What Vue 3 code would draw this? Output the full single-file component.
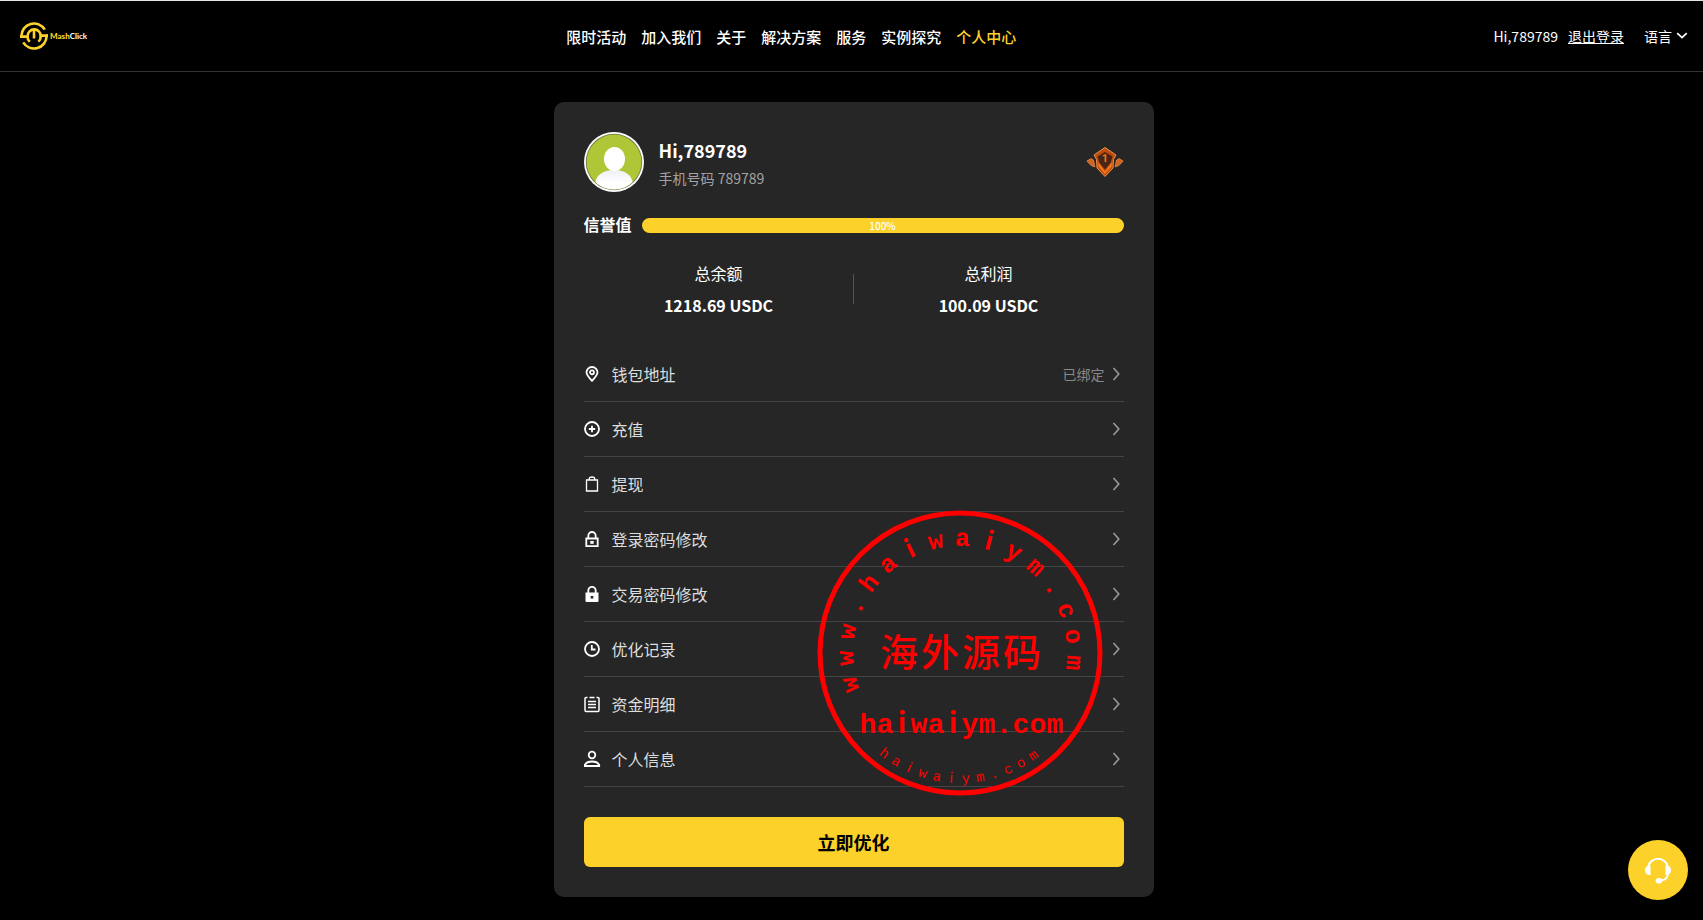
<script setup>
const navItems = ['限时活动', '加入我们', '关于', '解决方案', '服务', '实例探究', '个人中心']
const current = '个人中心'

const stats = [
  { label: '总余额', value: '1218.69 USDC' },
  { label: '总利润', value: '100.09 USDC' },
]

const menu = [
  { label: '钱包地址', icon: 'pin', note: '已绑定' },
  { label: '充值', icon: 'plus' },
  { label: '提现', icon: 'bag' },
  { label: '登录密码修改', icon: 'lock' },
  { label: '交易密码修改', icon: 'lockFill' },
  { label: '优化记录', icon: 'clock' },
  { label: '资金明细', icon: 'list' },
  { label: '个人信息', icon: 'user' },
]

const credit = 100

const upperArc = [...'www.haiwaiym.com'].map((char, i) => ({ char, angle: -106 + i * 13.4 }))
const lowerArc = [...'haiwaiym.com'].map((char, i) => ({ char, angle: 37 - i * 6.6 }))
const middleRow = [...'haiwaiym.com'].map((char, i) => ({ char, x: -92 + i * 17 }))
const titleRow = [...'海外源码'].map((char, i) => ({ char, x: -61 + i * 41 }))
</script>

<template>
  <div class="page">
    <header class="topbar">
      <a class="logo" href="#" aria-label="MashClick">
        <svg class="logo-mark" viewBox="0 0 28 28" aria-hidden="true">
          <g fill="none" stroke="#fbd12a" stroke-width="2.6">
            <path d="M1.4 15.500V14A12.600 12.600 0 0 1 24.800 7.600" />
            <path d="M26.600 12.500V14A12.600 12.600 0 0 1 3.200 20.400" />
            <path d="M0 14.600H7.600V14A6.600 6.600 0 0 1 20.800 14" />
            <path d="M28 13.600H20.600V14A6.600 6.600 0 0 1 18.400 19.600" />
            <path d="M7.400 14C7.400 16.500 8.200 18.400 9.800 19.800" />
            <path d="M14 7V16.500" />
          </g>
        </svg>
        <span class="logo-text"><b>Mash</b>Click</span>
      </a>
      <nav class="nav">
        <a v-for="item in navItems" :key="item" href="#" :class="{ active: item === current }">{{ item }}</a>
      </nav>
      <div class="account">
        <span>Hi,789789</span>
        <a class="logout" href="#">退出登录</a>
        <button class="lang" type="button">
          语言
          <svg viewBox="0 0 12 12" aria-hidden="true"><path d="M1.200 3.200 6 7.600l4.800-4.400" fill="none" stroke="#fff" stroke-width="1.700" /></svg>
        </button>
      </div>
    </header>

    <main class="content">
      <section class="card">
        <div class="profile">
          <svg class="avatar" viewBox="0 0 60 60" aria-hidden="true">
            <defs>
              <clipPath id="face"><circle cx="30" cy="30" r="27.500" /></clipPath>
              <linearGradient id="shirt" x1="0" y1="0" x2="0" y2="1"><stop stop-color="#edf0f7" /><stop offset=".6" stop-color="#fff" /></linearGradient>
            </defs>
            <circle cx="30" cy="30" r="30" fill="#fff" />
            <circle cx="30" cy="30" r="28.200" fill="#6d7548" />
            <circle cx="30" cy="30" r="27.400" fill="#afc736" />
            <g clip-path="url(#face)">
              <path d="M11 60V52C12 43 19 38 30 38S48 43 49 52V60Z" fill="url(#shirt)" />
              <ellipse cx="30.500" cy="27" rx="10.500" ry="12" fill="#fff" />
            </g>
          </svg>
          <div class="identity">
            <h1>Hi,789789</h1>
            <p>手机号码 789789</p>
          </div>
          <svg class="badge" viewBox="0 0 38 32" aria-label="1">
            <path d="M19 1.500 30 9 27.500 13.500 27 22 19 30.500 11 22 10.500 13.500 8 9Z" fill="#c04c0c" stroke="#e8914f" stroke-width="1" />
            <path d="M19 6 26.500 10.500 24.500 17 19 23.500 13.500 17 11.500 10.500Z" fill="#4a2414" />
            <path d="M12 16 19 25.500 26 16 25.500 20.500 19 28 12.500 20.500Z" fill="#f17a20" />
            <path d="M.8 15 5 12.500 7.500 14 9 21 5 19.500ZM37.200 15 33 12.500 30.500 14 29 21 33 19.500Z" fill="#d56420" stroke="#ef9955" stroke-width=".6" />
            <text x="19" y="16" text-anchor="middle">1</text>
          </svg>
        </div>

        <div class="credit">
          <span id="credit-label" class="credit-label">信誉值</span>
          <div class="track" role="progressbar" aria-labelledby="credit-label" :aria-valuenow="credit">
            <div class="fill" :style="{ width: credit + '%' }">{{ credit }}%</div>
          </div>
        </div>

        <dl class="stats">
          <div v-for="stat in stats" :key="stat.label">
            <dt>{{ stat.label }}</dt>
            <dd>{{ stat.value }}</dd>
          </div>
        </dl>

        <ul class="menu">
          <li v-for="item in menu" :key="item.label">
            <a href="#">
              <svg class="icon" viewBox="0 -1 18 18" aria-hidden="true">
                <g v-if="item.icon === 'pin'">
                  <path d="M8 14.800C4.800 11.500 2.500 9 2.500 6.300A5.500 5.300 0 0 1 13.500 6.300C13.500 9 11.200 11.500 8 14.800Z" />
                  <circle cx="8" cy="6.300" r="2" />
                </g>
                <g v-else-if="item.icon === 'plus'">
                  <circle cx="8" cy="8" r="7" />
                  <path d="M8 4.800V11.200M4.800 8H11.200" />
                </g>
                <g v-else-if="item.icon === 'bag'" class="thin">
                  <path d="M2.500 4H13.500V15H2.500ZM5.200 4V3Q5.200 1 8 1T10.800 3V4" />
                </g>
                <g v-else-if="item.icon === 'lock'">
                  <path d="M2.300 7.500H13.700V15.200H2.300ZM4.300 7.500V5A3.700 4 0 0 1 11.700 5V7.500" />
                  <rect class="solid" x="6.300" y="10" width="3.400" height="2.800" />
                </g>
                <g v-else-if="item.icon === 'lockFill'">
                  <path class="solid" fill-rule="evenodd" d="M1.500 6.500H14.500V15Q14.500 16 13.500 16H2.500Q1.500 16 1.500 15ZM6.700 10V12.500H9.300V10Z" />
                  <path d="M4.300 7V4.700A3.700 3.900 0 0 1 11.700 4.700V7" />
                </g>
                <g v-else-if="item.icon === 'clock'">
                  <circle cx="8" cy="8" r="7" />
                  <path d="M7.800 4V8.500H11.500" />
                </g>
                <g v-else-if="item.icon === 'list'" class="list">
                  <path d="M3.500 1.500H2Q1 1.500 1 2.500V14Q1 15.500 2 15.500H14Q15 15.500 15 14V2.500Q15 1.500 14 1.500H12.500M5.500 1.500H10.500M4 5.500H12M4 8.500H12M4 11.500H12" />
                </g>
                <g v-else>
                  <circle cx="8" cy="4" r="3.300" />
                  <path d="M.8 15V14Q2.500 10.500 8 10.500T15.200 14V15Z" />
                </g>
              </svg>
              <span class="label">{{ item.label }}</span>
              <span v-if="item.note" class="note">{{ item.note }}</span>
              <svg class="arrow" viewBox="0 0 16 16" aria-hidden="true"><path d="M5.500 2 10.800 8 5.500 14" /></svg>
            </a>
          </li>
        </ul>

        <button class="primary" type="button">立即优化</button>

        <svg class="stamp" viewBox="-143 -143 286 286" aria-hidden="true">
          <circle r="140" />
          <text v-for="(g, i) in upperArc" :key="'u' + i" class="arc" :class="{ plain: g.char === 'i' }" y="-107" :transform="`rotate(${g.angle})`">{{ g.char }}</text>
          <text v-for="(g, i) in titleRow" :key="'t' + i" class="title" :x="g.x" y="13">{{ g.char }}</text>
          <text v-for="(g, i) in middleRow" :key="'m' + i" class="domain" :class="{ plain: g.char === 'i' }" :x="g.x" y="80">{{ g.char }}</text>
          <text v-for="(g, i) in lowerArc" :key="'l' + i" class="small" :class="{ plain: g.char === 'i' }" y="130" :transform="`rotate(${g.angle})`">{{ g.char }}</text>
        </svg>
      </section>
    </main>

    <button class="support" type="button" aria-label="客服">
      <svg viewBox="0 0 30 30" aria-hidden="true">
        <path d="M5 13.500V12A10.200 10.200 0 0 1 25 12V13.500M25 18Q25 24.500 18 25.500" fill="none" stroke="#fff" stroke-width="2" />
        <path d="M7.500 10.500V20H6A4.800 4.800 0 0 1 5 10.800ZM22.500 10.500V20H24A4.800 4.800 0 0 0 25 10.800Z" fill="#fff" />
        <ellipse cx="16" cy="25.800" rx="3.400" ry="2.800" fill="#fff" />
      </svg>
    </button>
  </div>
</template>

<style>
body {
  margin: 0;
  background: #000;
}
</style>

<style scoped>
.page {
  box-sizing: border-box;
  min-height: 100vh;
  border-top: 1px solid #e1e5e5;
  background: #000;
  color: #fff;
  font-family: "Noto Sans CJK SC", sans-serif;
  font-size: 14px;
}
a {
  color: inherit;
  text-decoration: none;
}
button {
  border: 0;
  padding: 0;
  background: none;
  color: inherit;
  font: inherit;
  cursor: pointer;
}
.topbar {
  display: flex;
  align-items: center;
  justify-content: space-between;
  height: 70px;
  padding: 0 15px 0 20px;
  border-bottom: 1px solid #333;
}
.logo {
  display: flex;
  align-items: center;
  gap: 2px;
  min-width: 69px;
}
.logo-mark {
  width: 28px;
  height: 28px;
}
.logo-text {
  font: 700 8px/10px Lato, sans-serif;
}
.logo-text b {
  color: #fbd12a;
}
.nav {
  display: flex;
  gap: 15px;
  padding-top: 2px;
  font-size: 15px;
  font-weight: 500;
  line-height: 24px;
}
.nav .active {
  color: #fbd12a;
}
.account {
  display: flex;
  align-items: center;
  line-height: 24px;
}
.logout {
  margin: 0 20px 0 10px;
  text-decoration: underline;
}
.lang {
  display: flex;
  align-items: center;
  gap: 4px;
}
.lang svg {
  width: 12px;
  height: 12px;
}
.content {
  padding: 30px 0 22px 4px;
}
.card {
  position: relative;
  box-sizing: border-box;
  max-width: 600px;
  margin: 0 auto;
  padding: 30px;
  border-radius: 10px;
  background: #262626;
}
.profile {
  display: flex;
  align-items: center;
}
.avatar {
  width: 60px;
  height: 60px;
}
.identity {
  flex: 1;
  padding: 4px 0 0 15px;
}
.identity h1 {
  margin: 0;
  font-size: 18px;
  line-height: 28px;
}
.identity p {
  margin: 0;
  color: #a3a3a3;
  line-height: 28px;
}
.badge {
  width: 38px;
  height: 32px;
}
.badge text {
  fill: #f17a20;
  font: 700 11px Roboto, sans-serif;
}
.credit {
  display: flex;
  align-items: center;
  gap: 10px;
  margin-top: 20px;
  font-size: 16px;
  font-weight: 600;
  line-height: 24px;
}
.credit-label {
  padding-bottom: 2px;
}
.track {
  flex: 1;
}
.fill {
  border-radius: 8px;
  background: #fbd12a;
  font-size: 10px;
  font-weight: 500;
  line-height: 15px;
  text-align: center;
}
.stats {
  position: relative;
  display: flex;
  margin: 19px 0 0;
  font-size: 16px;
  line-height: 32px;
  text-align: center;
}
.stats::after {
  content: "";
  position: absolute;
  top: 17px;
  right: 50%;
  width: 1px;
  height: 30px;
  background: #555;
}
.stats div {
  flex: 1;
}
.stats dd {
  margin: 0;
  font-weight: 600;
}
.menu {
  margin: 26px 0 30px;
  padding: 0;
  list-style: none;
}
.menu a {
  display: flex;
  align-items: center;
  height: 54px;
  border-bottom: 1px solid #444;
  color: #ddd;
  font-size: 16px;
  line-height: 24px;
}
.icon {
  width: 18px;
  height: 18px;
}
.icon g {
  fill: none;
  stroke: #fff;
  stroke-width: 1.8;
}
.icon .thin {
  stroke-width: 1.3;
}
.icon .list {
  stroke-width: 1.5;
}
.icon .solid {
  fill: #fff;
  stroke: none;
}
.label {
  flex: 1;
  padding-left: 10px;
}
.note {
  margin-right: 3px;
  color: #888;
  font-size: 14px;
}
.arrow {
  width: 16px;
  height: 16px;
}
.arrow path {
  fill: none;
  stroke: #999;
  stroke-width: 1.6;
}
.primary {
  display: block;
  width: 100%;
  border-radius: 6px;
  background: #fbd12a;
  color: #000;
  font-size: 18px;
  font-weight: 600;
  line-height: 50px;
}
.stamp {
  position: absolute;
  top: 408px;
  left: 263px;
  width: 286px;
  height: 286px;
  pointer-events: none;
}
.stamp circle {
  fill: none;
  stroke: #f00;
  stroke-width: 5;
}
.stamp text {
  fill: #f00;
  font-family: "Liberation Mono", monospace;
  text-anchor: middle;
}
.arc {
  font-size: 25px;
  font-weight: 700;
}
.stamp .title {
  font-family: KaiTi, STKaiti, "Noto Sans CJK SC", serif;
  font-size: 38px;
  font-weight: 500;
}
.domain {
  font-size: 28px;
  font-weight: 700;
}
.small {
  font-size: 14px;
}
.stamp .plain {
  font-family: "Noto Sans CJK SC", sans-serif;
}
.support {
  position: fixed;
  right: 15px;
  bottom: 20px;
  display: grid;
  place-items: center;
  width: 60px;
  height: 60px;
  border-radius: 50%;
  background: #fbd12a;
}
.support svg {
  width: 30px;
  height: 30px;
}
</style>
